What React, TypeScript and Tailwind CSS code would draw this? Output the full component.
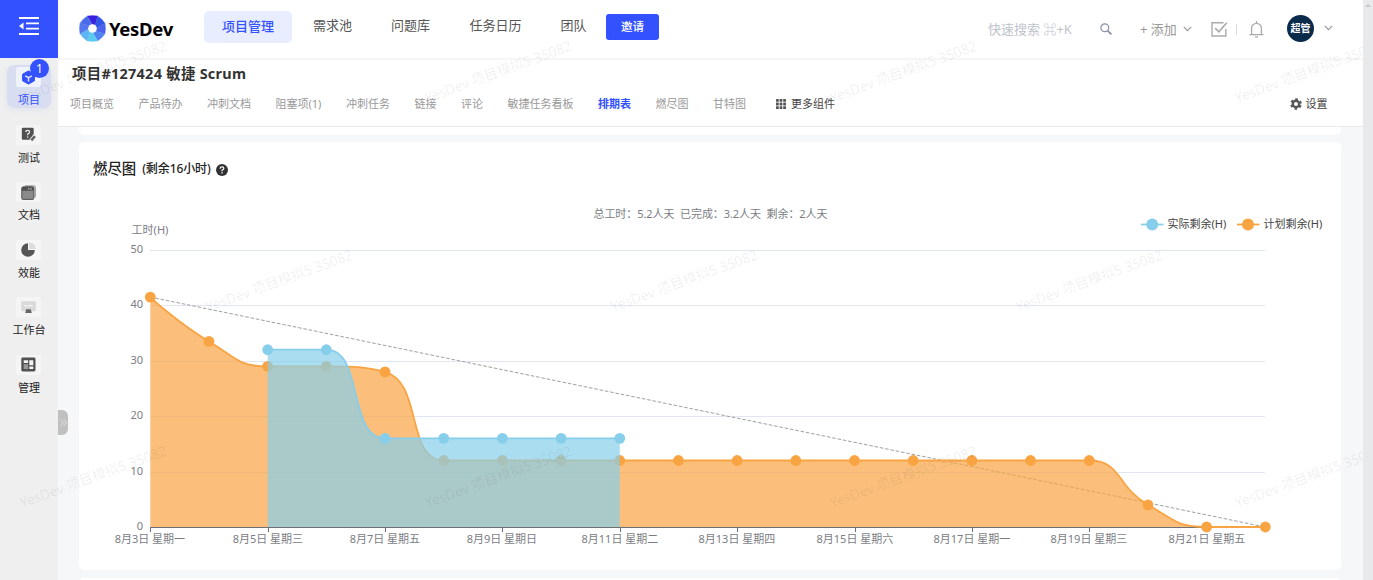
import React from "react";

type Pt = [number, number];

const X0 = 71.3;
const STEP = 1115 / 19;
const Y0 = 385;
const UNIT = 5.54;

const planned = [41.5, 33.5, 29, 29, 28, 12, 12, 12, 12, 12, 12, 12, 12, 12, 12, 12, 12, 4, 0, 0];
const actual = [32, 32, 16, 16, 16, 16, 16];
const dates = [
  "8月3日 星期一",
  "8月5日 星期三",
  "8月7日 星期五",
  "8月9日 星期日",
  "8月11日 星期二",
  "8月13日 星期四",
  "8月15日 星期六",
  "8月17日 星期一",
  "8月19日 星期三",
  "8月21日 星期五",
];

const toPoints = (values: number[], start: number): Pt[] =>
  values.map((v, i) => [X0 + (i + start) * STEP, Y0 - v * UNIT]);

const clamp = (v: number, a: number, b: number) =>
  Math.max(Math.min(v, Math.max(a, b)), Math.min(a, b));

/** Cubic smoothing whose control points never pass the neighbouring values. */
function smoothPath(pts: Pt[], smooth = 0.5): string {
  let d = `M${pts[0][0]} ${pts[0][1]}`;
  let c0: Pt = pts[0];
  for (let i = 1; i < pts.length; i++) {
    const [x, y] = pts[i];
    const [px, py] = pts[i - 1];
    let c1: Pt = [x, y];
    let next: Pt = [x, y];
    if (i < pts.length - 1) {
      const [nx, ny] = pts[i + 1];
      const lp = Math.hypot(x - px, y - py);
      const ln = Math.hypot(nx - x, ny - y);
      const r = ln / (ln + lp);
      const ax = clamp(x + (nx - px) * smooth * r, nx, x);
      const ay = clamp(y + (ny - py) * smooth * r, ny, y);
      c1 = [clamp(x - ((ax - x) * lp) / ln, px, x), clamp(y - ((ay - y) * lp) / ln, py, y)];
      next = [x + ((x - c1[0]) * ln) / lp, y + ((y - c1[1]) * ln) / lp];
    }
    d += `C${c0[0]} ${c0[1]} ${c1[0]} ${c1[1]} ${x} ${y}`;
    c0 = next;
  }
  return d;
}

function Series({ pts, color }: { pts: Pt[]; color: string }) {
  const line = smoothPath(pts);
  return (
    <g>
      <path d={`${line}L${pts[pts.length - 1][0]} ${Y0}L${pts[0][0]} ${Y0}Z`} fill={color} fillOpacity="0.7" />
      <path d={line} fill="none" stroke={color} strokeWidth="1.8" />
      {pts.map(([x, y]) => (
        <circle key={x} cx={x} cy={y} r="5.4" fill={color} />
      ))}
    </g>
  );
}

function Chart() {
  return (
    <svg width="1262" height="428" viewBox="0 0 1262 428" className="block text-[11px]">
      <text x="631.5" y="75.5" textAnchor="middle" fill="#7b7d84" xmlSpace="preserve" textLength="234">
        总工时：5.2人天  已完成：3.2人天  剩余：2人天
      </text>
      <text x="71" y="92" textAnchor="middle" fill="#7b7d84">工时(H)</text>
      {[0, 10, 20, 30, 40, 50].map((v) => {
        const y = Math.round(Y0 - v * UNIT) + 0.5;
        return (
          <g key={v}>
            {v > 0 && <line x1="71" x2="1186" y1={y} y2={y} stroke="#e0e6f1" />}
            <text x="64" y={y + 2.5} textAnchor="end" fill="#7b7d84">{v}</text>
          </g>
        );
      })}
      <line x1="71" x2="1186" y1="385.5" y2="385.5" stroke="#6e7079" />
      {dates.map((d, i) => {
        const x = Math.round(X0 + i * 2 * STEP) + 0.5;
        return (
          <g key={d}>
            <line x1={x} x2={x} y1="385" y2="390" stroke="#6e7079" />
            <text x={x - 0.6} y="400.5" textAnchor="middle" fill="#7b7d84">{d}</text>
          </g>
        );
      })}
      <line x1="71" y1="155" x2="1186" y2="385" stroke="#a0a0a0" strokeWidth="1" strokeDasharray="3.6 1.8" />
      <Series pts={toPoints(planned, 0)} color="#f9a443" />
      <Series pts={toPoints(actual, 2)} color="#87ceeb" />
      <g strokeWidth="1.8">
        <path d="M1062 82.5h22.5" stroke="#87ceeb" />
        <circle cx="1073.2" cy="82.5" r="6" fill="#87ceeb" />
        <path d="M1158 82.5h22.5" stroke="#f9a443" />
        <circle cx="1169" cy="82.5" r="6" fill="#f9a443" />
      </g>
      <text x="1088.5" y="86" fill="#444">实际剩余(H)</text>
      <text x="1184.5" y="86" fill="#444">计划剩余(H)</text>
    </svg>
  );
}

function Logo() {
  const colors = ["#3a22dc", "#3355e8", "#4a63ea", "#4f83f2", "#5dcbf0", "#5eb5f4", "#5377ec", "#4a6bea"];
  const at = (r: number, deg: number) => {
    const a = (deg * Math.PI) / 180;
    return `${13.5 + r * Math.sin(a)},${13.5 - r * Math.cos(a)}`;
  };
  return (
    <svg width="27" height="27" viewBox="0 0 27 27">
      {colors.map((c, i) => (
        <polygon
          key={c}
          fill={c}
          stroke={c}
          strokeWidth="0.3"
          points={`${at(13.6, i * 45 - 22.5)} ${at(13.1, i * 45)} ${at(13.6, i * 45 + 22.5)} ${at(4, i * 45 + 42)} ${at(4, i * 45 - 3)}`}
        />
      ))}
      <circle cx="13.5" cy="13.5" r="4.3" fill="#fff" />
    </svg>
  );
}

const sideIcons: Record<string, React.ReactNode> = {
  项目: (
    <>
      <path d="M7.5 .9 13.4 4.2v6.6L7.5 14.1 1.6 10.8V4.2Z" fill="#3351ff" stroke="#3351ff" strokeLinejoin="round" />
      <path d="M4.2 5.8 7.5 7.6l3.3-1.8M7.5 7.6v3.8" stroke="#dfe6ff" strokeWidth="1.5" fill="none" />
    </>
  ),
  测试: (
    <>
      <path d="M2 .8h9.5q1.2 0 1.2 1.2v5L8.6 12.8H2Q.8 12.8.8 11.6V2Q.8.8 2 .8Z" fill="#505050" />
      <path d="M4.8 5q0-1.7 1.9-1.7T8.6 5Q8.6 6.3 6.7 7v1.2M6.7 9.4v1.4" stroke="#eee" strokeWidth="1.3" fill="none" />
      <path d="m10 13.5 4.2-4.8" stroke="#f5f5f5" strokeWidth="4" />
      <path d="m10.3 13.3 3.6-4.2" stroke="#666" strokeWidth="2.6" />
    </>
  ),
  文档: (
    <>
      <path d="M4 .8h8.5q1.7 0 1.7 1.7v9.8" stroke="#999" strokeWidth="1.3" fill="none" />
      <rect x=".8" y="2" width="12" height="12.4" rx="1.6" fill="#8a8a8a" stroke="#606060" strokeWidth="1.2" />
      <path d="M1 3.2Q1 1.6 2.6 1.6H11q1.6 0 1.6 1.6v2.6H1Z" fill="#505050" />
      <path d="M7 3.9h1.4M9.4 3.9h1.4" stroke="#ddd" />
    </>
  ),
  效能: (
    <>
      <path d="M7 1.2A6.8 6.8 0 1 0 13.8 8H7Z" fill="#555" />
      <path d="M8.2 .4A6.6 6.6 0 0 1 14.8 6.9H8.2Z" fill="#dcdcdc" />
    </>
  ),
  工作台: (
    <>
      <rect x=".2" y="1.2" width="14.6" height="10" rx="1" fill="#d9d9d9" />
      <path d="m3 5 3 1.5 2-1 4 .5" stroke="#fafafa" fill="none" />
      <path d="M5.2 9.2h4.6l1 3.8H4.2Z" fill="#666" />
    </>
  ),
  管理: (
    <>
      <rect x=".3" y=".6" width="14.2" height="13.8" rx="1.4" fill="#505050" />
      <path d="M2.7 3.2h4.4v2.7H2.7ZM8.3 3.2h4v5h-4ZM8.3 9.4h4v2.5h-4Z" fill="#f4f4f4" />
      <path d="M2.7 7.2h4.4v4.9H2.7Z" fill="#999" />
    </>
  ),
};

function SideItem({ name, active }: { name: string; active?: boolean }) {
  return (
    <div
      className={
        active
          ? "relative mx-[7px] flex h-[43px] flex-col items-center rounded-[7px] bg-[#d8ddf1] pt-[2px] text-[#3351ff] shadow-[0_2px_6px_rgba(80,100,200,0.08)]"
          : "mx-[7px] flex h-[43px] flex-col items-center pt-[2px] text-[#222]"
      }
    >
      <span className={active ? "mr-[2px] flex h-5 w-[25px] items-center justify-center rounded-[2px] bg-[#eff3fd]" : "mr-[2px] flex h-5 w-[25px] items-center justify-center rounded-[2px] bg-[#f5f5f5]"}>
        <svg width="15" height="15" viewBox="0 0 15 15">{sideIcons[name]}</svg>
      </span>
      <span className="mt-[5px] whitespace-nowrap text-[11px] leading-4">{name}</span>
      {active && (
        <span className="absolute left-[23px] top-[-6px] flex h-[19px] w-[19px] items-center justify-center rounded-full bg-[#3351ff] text-[12px] text-white">
          1
        </span>
      )}
    </div>
  );
}

const tabs = ["项目概览", "产品待办", "冲刺文档", "阻塞项(1)", "冲刺任务", "链接", "评论", "敏捷任务看板", "排期表", "燃尽图", "甘特图"];

const marks: Pt[] = [
  [20, 103], [425, 103], [830, 103], [1235, 103],
  [206, 312], [611, 312], [1016, 312],
  [20, 508], [425, 508], [830, 508], [1235, 508],
];

function Watermark() {
  return (
    <svg width="1363" height="580" className="pointer-events-none absolute left-0 top-0 text-[14.2px]">
      {marks.map(([x, y]) => (
        <text
          key={`${x}-${y}`}
          transform={`translate(${x + 2} ${y}) rotate(-20)`}
          fill="#000"
          fillOpacity="0.07"
          textLength="155"
          lengthAdjust="spacingAndGlyphs"
        >
          YesDev 项目模拟5 35082
        </text>
      ))}
    </svg>
  );
}

function Chevron() {
  return (
    <svg width="9" height="6" viewBox="0 0 9 6" fill="none" stroke="#999" strokeWidth="1.2">
      <path d="m.8.8 3.7 3.8L8.2.8" />
    </svg>
  );
}

export default function App() {
  return (
    <div className="relative flex h-[580px] w-[1373px] overflow-hidden bg-[#f5f7f9] font-['Noto_Sans','Noto_Sans_CJK_SC',sans-serif] leading-4">
      <aside className="relative flex w-[58px] shrink-0 flex-col bg-[#efefef]">
        <div className="flex h-[58px] items-center justify-center bg-[#3351ff] pb-[6px]">
          <svg width="20" height="18" viewBox="0 0 20 18" fill="none" stroke="#fff" strokeWidth="1.8">
            <path d="M0 1h20M7 6.3h13M7 11.6h13M0 17h20" />
            <path d="M4.5 5.5v7L0 9Z" fill="#fff" stroke="none" />
          </svg>
        </div>
        <nav className="flex flex-col gap-[14.6px] pt-[7px]">
          <SideItem name="项目" active />
          <SideItem name="测试" />
          <SideItem name="文档" />
          <SideItem name="效能" />
          <SideItem name="工作台" />
          <SideItem name="管理" />
        </nav>
      </aside>

      <main className="flex w-[1305px] shrink-0 flex-col">
        <header className="flex h-[58px] shrink-0 items-center bg-white pl-[20.5px]">
          <div className="-mt-px flex w-[125.5px] items-center gap-[3.5px]">
            <Logo />
            <span className="mt-px font-['Noto_Sans'] text-[18.5px] font-bold leading-6 tracking-[-0.3px] text-black">YesDev</span>
          </div>
          <nav className="mt-[-5px] flex items-center text-[13px] text-[#555]">
            <span className="flex h-8 w-[88px] items-center justify-center rounded-[5px] bg-[#e8edff] pb-[2px] font-medium text-[#3351ff]">项目管理</span>
            <span className="ml-[21px] pb-[3px]">需求池</span>
            <span className="ml-[39px] pb-[3px]">问题库</span>
            <span className="ml-[39.5px] pb-[3px]">任务日历</span>
            <span className="ml-[39px] pb-[3px]">团队</span>
            <span className="ml-[19.5px] flex h-[26px] w-[53px] items-center justify-center rounded-[3px] bg-[#3351ff] text-[11.5px] font-medium text-white">邀请</span>
          </nav>
          <div className="ml-auto flex items-center pr-[30px] text-[13px] text-[#999]">
            <span className="w-[112px] whitespace-nowrap text-[#c0c4cc]">快速搜索 ⌘+K</span>
            <svg width="12" height="12" viewBox="0 0 12 12" fill="none" stroke="#8a8fa3" strokeWidth="1.2">
              <circle cx="4.8" cy="4.8" r="3.9" />
              <path d="m7.6 7.6 3.8 3.8" strokeWidth="1.7" />
            </svg>
            <span className="ml-[28px] w-[43px] whitespace-nowrap">+ 添加</span>
            <Chevron />
            <svg className="ml-[19px]" width="17" height="17" viewBox="0 0 17 17" fill="none" stroke="#aaa" strokeWidth="1.4">
              <path d="M14.8 8v7H1V1.7h11.5" />
              <path d="m4.2 7.2 3.6 3.6 8-9" strokeWidth="1.7" />
            </svg>
            <span className="ml-[8px] h-[11px] w-px bg-[#ddd]" />
            <svg className="ml-[12px]" width="15" height="17" viewBox="0 0 15 17" fill="none" stroke="#aaa" strokeWidth="1.3">
              <path d="M7.5 0v2M.5 13.6h14M2.6 13.6V7.2a4.9 4.9 0 0 1 9.8 0v6.4M6 15.8h3" />
            </svg>
            <span className="ml-[23px] mt-[-2px] flex h-[27px] w-[27px] items-center justify-center rounded-full bg-[#0b2b4b] text-[10px] font-bold text-white">超管</span>
            <span className="mb-[2px] ml-[10px] flex"><Chevron /></span>
          </div>
        </header>

        <section className="h-[69px] shrink-0 border-b border-[#e9e9ec] bg-white shadow-[inset_0_2px_2px_rgba(0,0,0,0.045)]">
          <h1 className="pl-[14px] pt-[7px] text-[14.4px] font-bold leading-[18px] tracking-[0.3px] text-[#333]">项目#127424 敏捷 Scrum</h1>
          <div className="mt-[12px] flex items-center pl-[12px] text-[11px] text-[#999]">
            <div className="flex gap-[24.5px]">
              {tabs.map((t) => (
                <span key={t} className={t === "排期表" ? "font-bold text-[#3351ff]" : ""}>{t}</span>
              ))}
            </div>
            <span className="ml-[30px] flex items-center gap-[5px] text-[#444]">
              <svg width="10" height="10" viewBox="0 0 10 10" fill="#555">
                {[0, 3.6, 7.2].map((y) => [0, 3.6, 7.2].map((x) => <rect key={`${x}${y}`} x={x} y={y} width="2.8" height="2.8" rx=".5" />))}
              </svg>
              更多组件
            </span>
            <span className="ml-auto mr-[35.5px] mt-px flex items-center gap-[4px] text-[#444]">
              <svg width="12" height="12" viewBox="0 0 12 12">
                <circle cx="6" cy="6" r="3.2" fill="none" stroke="#555" strokeWidth="2.4" />
                <circle cx="6" cy="6" r="4.8" fill="none" stroke="#555" strokeWidth="2" strokeDasharray="2.5 2.526" strokeDashoffset="-1.25" />
              </svg>
              设置
            </span>
          </div>
        </section>

        <div className="flex flex-col pl-[21px] pr-[22px]">
          <div className="h-2 rounded-b-[5px] bg-white" />
          <section className="relative mt-[7px] h-[428px] rounded-[5px] bg-white">
            <h2 className="absolute left-[14px] top-[19px] flex items-center text-[14.4px] font-medium text-[#222]">
              燃尽图
              <span className="ml-[6px] text-[12px] tracking-[-0.1px]">(剩余16小时)</span>
              <svg className="ml-[5px] mt-[1px]" width="12" height="12" viewBox="0 0 11 11">
                <circle cx="5.5" cy="5.5" r="5.5" fill="#303133" />
                <path d="M3.8 4.4q0-1.7 1.7-1.7t1.7 1.5Q7.2 5.2 5.5 5.7v.9M5.5 7.3v1.3" fill="none" stroke="#fff" strokeWidth="1.1" />
              </svg>
            </h2>
            <Chart />
          </section>
          <div className="mt-2 h-2 rounded-t-[5px] bg-white" />
        </div>
      </main>

      <div className="flex w-[10px] shrink-0 justify-center bg-[#e8e9eb] pt-[4px]">
        <svg width="6" height="3" viewBox="0 0 6 3"><path d="M3 0 6 3H0Z" fill="#c5c7ca" /></svg>
      </div>

      <div className="absolute left-[58px] top-[410px] flex h-[25px] w-[10px] items-center justify-center rounded-r-[6px] bg-[#c0c0c0]">
        <svg width="7" height="7" viewBox="0 0 7 7" fill="none" stroke="#e8e8e8" strokeWidth=".8"><path d="m.5.5 2.7 3-2.7 3M3.7.5l2.7 3-2.7 3" /></svg>
      </div>
      <Watermark />
    </div>
  );
}
